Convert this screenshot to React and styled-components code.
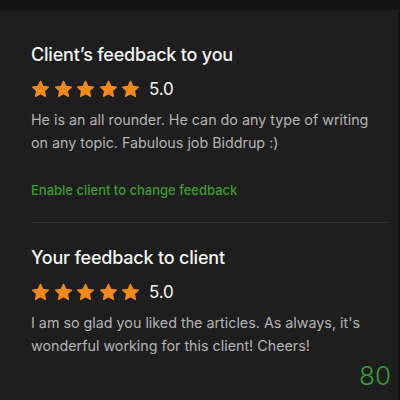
import React from 'react'
import styled, { createGlobalStyle } from 'styled-components'

const Global = createGlobalStyle`
  html, body {
    margin: 0;
    background: #131313;
  }
  body {
    font-family: Inter, "Liberation Sans", sans-serif;
  }
`

const Star = () => (
  <svg width="19" height="18" viewBox="0 0 24 23">
    <path
      d="M12 1.6l3.1 6.5 7.1.9-5.2 4.9 1.3 7.1L12 17.6l-6.3 3.4L7 13.9 1.8 9l7.1-.9z"
      fill="#f0891d"
      stroke="#f0891d"
      strokeWidth="1.6"
      strokeLinejoin="round"
    />
  </svg>
)

const Rating = ({ value }) => (
  <RatingRow>
    <Stars>
      {[0, 1, 2, 3, 4].map(i => (
        <Star key={i} />
      ))}
    </Stars>
    <Score>{value}</Score>
  </RatingRow>
)

export default () => (
  <Page>
    <Global />
    <Card>
      <Section>
        <Heading>Client’s feedback to you</Heading>
        <Rating value="5.0" />
        <Body>
          He is an all rounder. He can do any type of writing on any topic.
          Fabulous job Biddrup :)
        </Body>
        <Action>Enable client to change feedback</Action>
      </Section>
      <Divider />
      <Section>
        <Heading>Your feedback to client</Heading>
        <Rating value="5.0" />
        <Body>
          I am so glad you liked the articles. As always, it's wonderful
          working for this client! Cheers!
        </Body>
      </Section>
      <Count>80</Count>
    </Card>
  </Page>
)

const Page = styled.div`
  width: 400px;
  height: 400px;
  padding-top: 10px;
  box-sizing: border-box;
  background: #131313;
  overflow: hidden;
`

const Card = styled.div`
  height: 390px;
  margin-right: 2px;
  background: #1e1e1e;
  padding: 34px 9px 0 31px;
  box-sizing: border-box;
  display: flex;
  flex-direction: column;
`

const Section = styled.div`
  display: flex;
  flex-direction: column;
`

const Heading = styled.h2`
  margin: 0;
  font-size: 18px;
  font-weight: 500;
  line-height: 22px;
  color: #f4f4f4;
  letter-spacing: -0.2px;
`

const RatingRow = styled.div`
  display: flex;
  align-items: center;
  margin-top: 12px;
  height: 22px;
`

const Stars = styled.div`
  display: flex;
  gap: 3.5px;
`

const Score = styled.span`
  margin-left: 9px;
  font-size: 17px;
  color: #f4f4f4;
  letter-spacing: -0.2px;
`

const Body = styled.p`
  margin: 8px 0 0;
  font-size: 14.3px;
  line-height: 23px;
  color: #b4b4b4;
  max-width: 350px;
`

const Action = styled.a`
  margin-top: 27px;
  font-size: 13px;
  line-height: 18px;
  color: #3d9b2f;
  font-weight: 500;
`

const Divider = styled.hr`
  margin: 23px 1px 24px 0;
  border: none;
  border-top: 1px solid #2f2f2f;
`

const Count = styled.div`
  align-self: flex-end;
  margin: 5px -2px 0 0;
  font-size: 26px;
  font-weight: 300;
  color: #3c9a3c;
  line-height: 28px;
`
